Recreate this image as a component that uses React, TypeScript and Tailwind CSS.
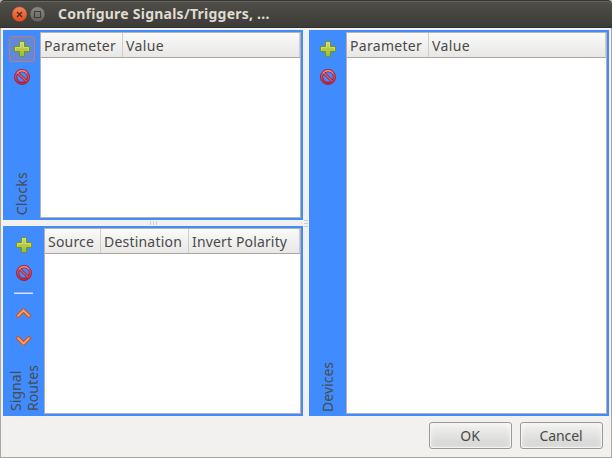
import React from "react";

function PlusIcon() {
  return (
    <svg width="16" height="16" viewBox="0 0 16 16" className="block">
      <defs>
        <linearGradient id="plusFill" x1="0" y1="0" x2="0" y2="1">
          <stop offset="0" stopColor="#cfdc5c" />
          <stop offset="1" stopColor="#a0b92e" />
        </linearGradient>
      </defs>
      <path d="M5.5 .5h5v5h5v5h-5v5h-5v-5h-5v-5h5z" fill="url(#plusFill)" stroke="#6f951f" strokeLinejoin="round" />
      <path d="M1.5 9.5v-3h5v-5h3v5h5v3" fill="none" stroke="#dde68c" strokeOpacity=".6" />
    </svg>
  );
}

function BlockIcon() {
  return (
    <svg width="16" height="16" viewBox="0 0 16 16" className="block">
      <defs>
        <linearGradient id="blockFill" x1="0" y1="0" x2="0" y2="1">
          <stop offset="0" stopColor="#ee6a5c" />
          <stop offset="1" stopColor="#c8243c" />
        </linearGradient>
      </defs>
      <circle cx="8" cy="8" r="6.4" fill="none" stroke="#a01a34" strokeWidth="3.1" />
      <path d="M4 4l8 8" stroke="#a01a34" strokeWidth="2.9" />
      <circle cx="8" cy="8" r="6.4" fill="none" stroke="url(#blockFill)" strokeWidth="1.5" />
      <path d="M4 4l8 8" stroke="#e05a5c" strokeWidth="1.4" />
      <path d="M3 4.3A6.3 6.3 0 0 1 13 4.3" fill="none" stroke="#f7a595" strokeWidth=".8" />
    </svg>
  );
}

function Chevron({ down = false }: { down?: boolean }) {
  const d = down ? "M2 2.1L7.5 7.7L13 2.1" : "M2 7.9L7.5 2.3L13 7.9";
  return (
    <svg width="16" height="10" viewBox="0 0 16 10" className="block overflow-visible">
      <path d={d} fill="none" stroke="#d4501f" strokeWidth="4" strokeLinecap="round" strokeLinejoin="round" />
      <path d={d} fill="none" stroke="#f5a56c" strokeWidth="1.8" strokeLinecap="round" strokeLinejoin="round" />
    </svg>
  );
}

function Col({ children, className }: { children?: React.ReactNode; className: string }) {
  return (
    <div className={"flex items-center overflow-visible whitespace-nowrap border-r border-[#cfcdca] pl-[3px] " + className}>
      {children}
    </div>
  );
}

function Table({ children }: { children: React.ReactNode }) {
  return (
    <div className="flex min-w-0 flex-1 flex-col border border-[#b5b1ac] bg-white">
      <div className="flex h-[25px] shrink-0 border-b border-[#aaa6a0] bg-linear-to-b from-[#fafafa] to-[#e8e7e5] text-[14px]">
        {children}
      </div>
    </div>
  );
}

function Panel({ children, className }: { children: React.ReactNode; className: string }) {
  return <div className={"flex bg-[#408cff] py-[2px] pr-[2px] " + className}>{children}</div>;
}

function SideLabel({ children, className }: { children: React.ReactNode; className: string }) {
  return (
    <div className={"mt-auto rotate-180 whitespace-nowrap text-[14px] leading-[17px] [writing-mode:vertical-rl] " + className}>
      {children}
    </div>
  );
}

function Button({ children }: { children: React.ReactNode }) {
  return (
    <button className="flex h-[27px] w-[83px] items-center justify-center rounded-[3px] border border-[#9b9995] bg-linear-to-b from-[#f3f3f2] to-[#d2d2d1] pr-[1px] text-[14px] tracking-[-0.1px] shadow-[inset_0_0_0_1px_#f4f4f3,inset_0_0_6px_#ffffffaa]">
      {children}
    </button>
  );
}

export default function App() {
  return (
    <div className="flex h-[458px] w-[612px] flex-col overflow-hidden bg-[#b9b7b4] font-['Noto_Sans',sans-serif] text-[#4a4a4a]">
      <header className="flex h-[28px] shrink-0 items-center rounded-t-[5px] border-b border-[#302f2b] bg-linear-to-b from-[#504f49] to-[#3c3b37] pl-[12px] shadow-[inset_0_1px_0_#373632,inset_0_2px_0_#66655f]">
        <svg width="34" height="17" viewBox="0 0 34 17" className="mt-[2px] block overflow-visible">
          <defs>
            <linearGradient id="closeFill" x1="0" y1="0" x2="0" y2="1">
              <stop offset="0" stopColor="#f58560" />
              <stop offset="1" stopColor="#df4a16" />
            </linearGradient>
            <linearGradient id="maxFill" x1="0" y1="0" x2="0" y2="1">
              <stop offset="0" stopColor="#8b8a82" />
              <stop offset="1" stopColor="#625f58" />
            </linearGradient>
          </defs>
          <circle cx="7.5" cy="8.3" r="7.7" fill="url(#closeFill)" stroke="#34332f" strokeWidth=".6" />
          <path d="M5 6l5 5M10 6l-5 5" stroke="#51291b" strokeWidth="1.3" />
          <circle cx="25.5" cy="8.3" r="7.7" fill="url(#maxFill)" stroke="#34332f" strokeWidth=".6" />
          <rect x="22.5" y="5.5" width="6" height="6" fill="none" stroke="#3c3b37" />
        </svg>
        <h1 className="ml-[12px] whitespace-nowrap text-[14px] font-bold tracking-[0.24px] text-[#dfdbd2]">Configure Signals/Triggers, ...</h1>
      </header>
      <main className="flex flex-1 flex-col border border-t-0 border-[#aaa6a1] bg-[#f2f1f0] px-[2px] pt-[2px]">
        <div className="flex h-[386px] w-[606px]">
          <div className="flex w-[300px] flex-col">
            <Panel className="h-[190px]">
              <div className="flex w-[37px] flex-col items-center">
                <div className="mt-[4px] ml-[1px] flex h-[26px] w-[26px] items-center justify-center rounded-[3px] border border-[#c27b7c] bg-[#6488d8]">
                  <PlusIcon />
                </div>
                <div className="mt-[7px] ml-[1px]"><BlockIcon /></div>
                <SideLabel className="mb-[3px] tracking-[0.25px]">Clocks</SideLabel>
              </div>
              <Table>
                <Col className="w-[82px] tracking-[0.3px]">Parameter</Col>
                <Col className="flex-1 tracking-[0.35px]">Value</Col>
              </Table>
            </Panel>
            <div className="flex h-[6px] items-center justify-center gap-[2px]">
              <i className="h-[4px] w-px bg-[#cfcdca]" />
              <i className="h-[4px] w-px bg-[#cfcdca]" />
              <i className="h-[4px] w-px bg-[#cfcdca]" />
            </div>
            <Panel className="h-[190px]">
              <div className="flex w-[41px] flex-col items-center">
                <div className="mt-[9px] ml-[1px]"><PlusIcon /></div>
                <div className="mt-[12px] ml-[1px]"><BlockIcon /></div>
                <div className="mt-[11px] h-[2px] w-[19px] border-t border-[#8fb3ea] bg-[#d5e3fa]" />
                <div className="mt-[14px] ml-[1px]"><Chevron /></div>
                <div className="mt-[18px] ml-[1px]"><Chevron down /></div>
                <SideLabel className="mb-[3px] tracking-[0.1px]">Signal<br />Routes</SideLabel>
              </div>
              <Table>
                <Col className="w-[56px] tracking-[0.2px]">Source</Col>
                <Col className="w-[88px] tracking-[0.2px]">Destination</Col>
                <Col className="flex-1 tracking-[0.15px]">Invert Polarity</Col>
              </Table>
            </Panel>
          </div>
          <div className="flex w-[6px] flex-col items-center justify-center gap-[2px]">
            <i className="h-px w-[4px] bg-[#cfcdca]" />
            <i className="h-px w-[4px] bg-[#cfcdca]" />
            <i className="h-px w-[4px] bg-[#cfcdca]" />
          </div>
          <Panel className="w-[300px]">
            <div className="flex w-[37px] flex-col items-center">
              <div className="mt-[9px] ml-[1px]"><PlusIcon /></div>
              <div className="mt-[12px] ml-[1px]"><BlockIcon /></div>
              <SideLabel className="mb-[2px]">Devices</SideLabel>
            </div>
            <Table>
              <Col className="w-[82px] tracking-[0.3px]">Parameter</Col>
              <Col className="flex-1 tracking-[0.35px]">Value</Col>
            </Table>
          </Panel>
        </div>
        <footer className="flex justify-end gap-[8px] pt-[6px] pr-[6px]">
          <Button>OK</Button>
          <Button>Cancel</Button>
        </footer>
      </main>
    </div>
  );
}
